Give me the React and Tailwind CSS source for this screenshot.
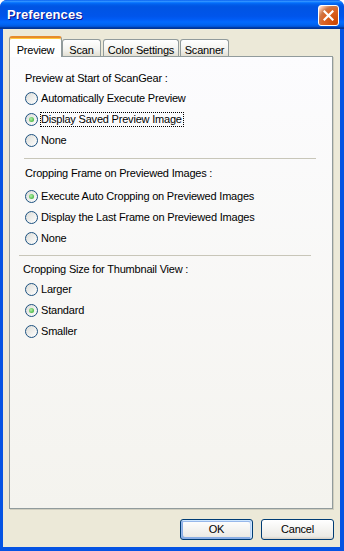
import React from "react";

const F = "font-['Liberation_Sans',Arial,sans-serif]";

function Radio({ checked, label, focus }) {
  return (
    <div className="flex items-center h-[21px] pl-[15px]">
      <span className="w-[13px] h-[13px] rounded-full border border-[#1c5180] bg-[linear-gradient(135deg,#dcdcd7,#ffffff)] flex items-center justify-center shrink-0">
        {checked && (
          <span className="w-[5px] h-[5px] rounded-full bg-[radial-gradient(circle_at_40%_40%,#b4f0a8,#21a121)]" />
        )}
      </span>
      <span
        className={`ml-[2px] pl-0 pr-[1px] leading-[13px] border border-dotted ${
          focus ? "border-black" : "border-transparent"
        }`}
      >
        {label}
      </span>
    </div>
  );
}

function Tab({ label, selected, w, ml = "" }) {
  if (selected) {
    return (
      <div
        className={`relative z-10 -mb-px h-[21px] ${w} ${ml} rounded-t-[3px] border-x border-[#919b9c] bg-white border-t-2 border-t-[#e68b2c] shadow-[inset_0_1px_0_#ffc73c] flex items-start justify-center pt-[4px] text-black`}
      >
        {label}
      </div>
    );
  }
  return (
    <div
      className={`h-[17px] ${w} ${ml} rounded-t-[3px] border-x border-t border-[#919b9c] bg-[linear-gradient(to_bottom,#ffffff,#f3f3ef_60%,#e2dfd3)] flex items-start justify-center pt-[2px] text-black`}
    >
      {label}
    </div>
  );
}

export default function App() {
  return (
    <div className={`w-[344px] h-[551px] bg-white ${F} text-[11px] tracking-[-0.2px] text-black`}>
      <div className="w-full h-full flex flex-col rounded-t-[7px] overflow-hidden bg-[#0831d9]">
        {/* Title bar */}
        <div className="h-[29px] shrink-0 flex items-center pl-[7px] pr-[5px] bg-[linear-gradient(to_bottom,#0058ee_0%,#3593ff_4%,#288eff_6%,#127dff_8%,#036ffc_10%,#0262ee_14%,#0057e5_20%,#0054e3_24%,#0055eb_56%,#005bf5_66%,#026afe_76%,#0062ef_86%,#0052d6_92%,#0040ab_94%,#003092_100%)]">
          <span className="text-white font-bold text-[13px] tracking-[0.1px] [text-shadow:1px_1px_#0f1089] flex-1 mt-[1px]">
            Preferences
          </span>
          <div className="w-[21px] h-[21px] rounded-[3px] border border-white bg-[radial-gradient(circle_at_90%_90%,#cc4600_0%,#dc6527_55%,#cd7546_70%,#ffccb2_90%,#ffffff_100%)] flex items-center justify-center mt-[1px]">
            <svg width="11" height="11" viewBox="0 0 11 11">
              <path d="M1.5 1.5 L9.5 9.5 M9.5 1.5 L1.5 9.5" stroke="white" strokeWidth="2.2" strokeLinecap="square" />
            </svg>
          </div>
        </div>

        {/* Body */}
        <div className="flex-1 flex flex-col bg-[#ece9d8] border-l-[3px] border-r-[4px] border-b-[4px] border-[#0553e3]">
          {/* Tabs */}
          <div className="flex items-end pt-[7px] pl-[6px]">
            <Tab label="Preview" selected w="w-[53px]" />
            <Tab label="Scan" w="w-[39px]" />
            <Tab label="Color Settings" w="w-[76px]" ml="ml-[2px]" />
            <Tab label="Scanner" w="w-[49px]" ml="ml-[1px]" />
          </div>

          {/* Panel */}
          <div className="ml-[6px] mr-[7px] h-[453px] border border-[#919b9c] shadow-[1px_1px_0_#d0cebf] bg-[linear-gradient(to_bottom,#fcfcfe,#f4f3ee)] flex flex-col">
            <div className="mt-[15px] ml-[15px] h-[13px] leading-[13px]">Preview at Start of ScanGear :</div>
            <div className="mt-[3px]">
              <Radio label="Automatically Execute Preview" />
              <Radio label="Display Saved Preview Image" checked focus />
              <Radio label="None" />
            </div>
            <div className="mt-[7px] ml-[14px] mr-[16px] h-px bg-[#c8c6b9]" />
            <div className="mt-[8px] ml-[15px] h-[13px] leading-[13px]">Cropping Frame on Previewed Images :</div>
            <div className="mt-[6px]">
              <Radio label="Execute Auto Cropping on Previewed Images" checked />
              <Radio label="Display the Last Frame on Previewed Images" />
              <Radio label="None" />
            </div>
            <div className="mt-[6px] ml-[9px] mr-[21px] h-px bg-[#c8c6b9]" />
            <div className="mt-[7px] ml-[13px] h-[13px] leading-[13px]">Cropping Size for Thumbnail View :</div>
            <div className="mt-[3px]">
              <Radio label="Larger" />
              <Radio label="Standard" checked />
              <Radio label="Smaller" />
            </div>
          </div>

          {/* Buttons */}
          <div className="flex justify-end gap-[8px] pr-[6px] mt-[10px]">
            <button className="w-[73px] h-[21px] rounded-[3px] border border-[#003c74] bg-[linear-gradient(to_bottom,#ffffff,#ecebe6_86%,#d6d0c5)] shadow-[inset_-1px_1px_#cee7ff,inset_1px_2px_#98b8ea,inset_-2px_2px_#bcd4f6,inset_1px_-1px_#89ade4,inset_2px_-2px_#89ade4] text-[11px] text-black flex items-center justify-center">
              OK
            </button>
            <button className="w-[73px] h-[21px] rounded-[3px] border border-[#003c74] bg-[linear-gradient(to_bottom,#ffffff,#ecebe6_86%,#d6d0c5)] text-[11px] text-black flex items-center justify-center">
              Cancel
            </button>
          </div>
        </div>
      </div>
    </div>
  );
}
